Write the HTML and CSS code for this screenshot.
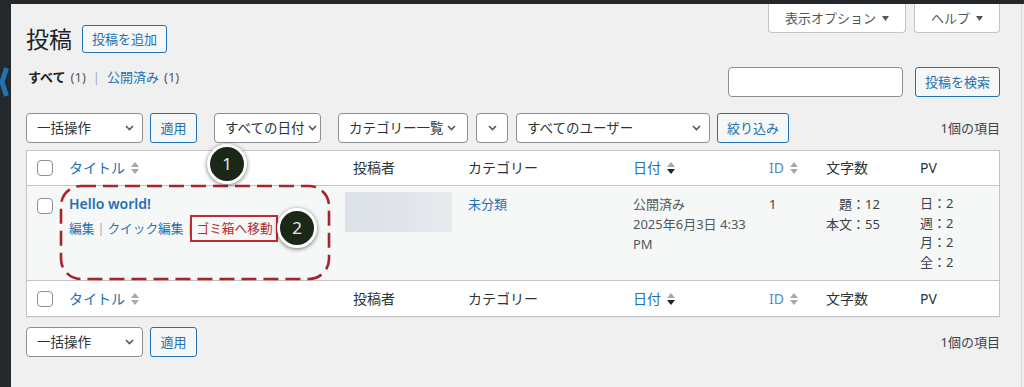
FILE: index.html
```html
<!DOCTYPE html>
<html lang="ja">
<head>
<meta charset="utf-8">
<title>投稿</title>
<link rel="stylesheet" href="styles.css">
</head>
<body>
<div class="topbar"></div>
<div class="shell">
  <aside class="sidebar">
    <svg class="menu-mark" width="11" height="30" viewBox="0 0 11 30"><polyline points="6.5,1 2,15 6.5,29" fill="none" stroke="#2271b1" stroke-width="5"/></svg>
  </aside>
  <main class="main">
    <div class="header">
      <div class="title-wrap">
        <h1 class="page-title">投稿</h1>
        <a class="btn-outline title-action">投稿を追加</a>
      </div>
      <div class="screen-meta">
        <div class="meta-tab">表示オプション <svg class="tri" width="7" height="5" viewBox="0 0 7 5"><path d="M0 0h7L3.5 5z" fill="#50575e"/></svg></div>
        <div class="meta-tab">ヘルプ <svg class="tri" width="7" height="5" viewBox="0 0 7 5"><path d="M0 0h7L3.5 5z" fill="#50575e"/></svg></div>
      </div>
    </div>

    <div class="subnav">
      <ul class="subsubsub">
        <li><b class="current">すべて</b><span class="count">(1)</span></li>
        <li class="sep">|</li>
        <li><a>公開済み</a><span class="count">(1)</span></li>
      </ul>
      <div class="search">
        <div class="search-input"></div>
        <a class="btn-outline search-btn">投稿を検索</a>
      </div>
    </div>

    <div class="tablenav">
      <div class="select w-bulk">一括操作<svg class="chev" width="9" height="6" viewBox="0 0 9 6"><path d="M1 1l3.5 3.5L8 1" fill="none" stroke="#50575e" stroke-width="1.6"/></svg></div>
      <a class="btn-outline apply">適用</a>
      <div class="filters">
        <div class="select w-date">すべての日付<svg class="chev" width="9" height="6" viewBox="0 0 9 6"><path d="M1 1l3.5 3.5L8 1" fill="none" stroke="#50575e" stroke-width="1.6"/></svg></div>
        <div class="select w-cat">カテゴリー一覧<svg class="chev" width="9" height="6" viewBox="0 0 9 6"><path d="M1 1l3.5 3.5L8 1" fill="none" stroke="#50575e" stroke-width="1.6"/></svg></div>
        <div class="select w-small"><svg class="chev" width="9" height="6" viewBox="0 0 9 6"><path d="M1 1l3.5 3.5L8 1" fill="none" stroke="#50575e" stroke-width="1.6"/></svg></div>
        <div class="select w-user">すべてのユーザー<svg class="chev" width="9" height="6" viewBox="0 0 9 6"><path d="M1 1l3.5 3.5L8 1" fill="none" stroke="#50575e" stroke-width="1.6"/></svg></div>
        <a class="btn-outline filter-btn">絞り込み</a>
      </div>
      <div class="displaying">1個の項目</div>
    </div>

    <div class="list">
      <div class="tr thead">
        <div class="th cbh"><span class="checkbox"></span></div>
        <div class="th sortable"><a>タイトル</a><svg class="sort" width="8" height="12" viewBox="0 0 8 12"><path d="M0 5L4 0l4 5z" fill="#a7aaad"/><path d="M0 7h8l-4 5z" fill="#a7aaad"/></svg></div>
        <div class="th">投稿者</div>
        <div class="th">カテゴリー</div>
        <div class="th sortable"><a>日付</a><svg class="sort" width="8" height="12" viewBox="0 0 8 12"><path d="M0 5L4 0l4 5z" fill="#a7aaad"/><path d="M0 7h8l-4 5z" fill="#1d2327"/></svg></div>
        <div class="th sortable"><a class="light">ID</a><svg class="sort" width="8" height="12" viewBox="0 0 8 12"><path d="M0 5L4 0l4 5z" fill="#a7aaad"/><path d="M0 7h8l-4 5z" fill="#a7aaad"/></svg></div>
        <div class="th">文字数</div>
        <div class="th">PV</div>
      </div>

      <div class="tr tbody">
        <div class="td cb"><span class="checkbox"></span></div>
        <div class="td">
          <a class="row-title">Hello world!</a>
          <div class="row-actions"><a>編集</a><span class="ra-sep">|</span><a>クイック編集</a><span class="ra-sep">|</span><a class="trash">ゴミ箱へ移動</a></div>
        </div>
        <div class="td author"><div class="blur"></div></div>
        <div class="td"><a>未分類</a></div>
        <div class="td date">公開済み<br>2025年6月3日 4:33<br>PM</div>
        <div class="td">1</div>
        <div class="td"><div class="words">題：12<br>本文：55</div></div>
        <div class="td pv">日：2<br>週：2<br>月：2<br>全：2</div>
      </div>

      <div class="tr tfoot">
        <div class="th cbh"><span class="checkbox"></span></div>
        <div class="th sortable"><a>タイトル</a><svg class="sort" width="8" height="12" viewBox="0 0 8 12"><path d="M0 5L4 0l4 5z" fill="#a7aaad"/><path d="M0 7h8l-4 5z" fill="#a7aaad"/></svg></div>
        <div class="th">投稿者</div>
        <div class="th">カテゴリー</div>
        <div class="th sortable"><a>日付</a><svg class="sort" width="8" height="12" viewBox="0 0 8 12"><path d="M0 5L4 0l4 5z" fill="#a7aaad"/><path d="M0 7h8l-4 5z" fill="#1d2327"/></svg></div>
        <div class="th sortable"><a class="light">ID</a><svg class="sort" width="8" height="12" viewBox="0 0 8 12"><path d="M0 5L4 0l4 5z" fill="#a7aaad"/><path d="M0 7h8l-4 5z" fill="#a7aaad"/></svg></div>
        <div class="th">文字数</div>
        <div class="th">PV</div>
      </div>
    </div>

    <div class="tablenav bottom">
      <div class="select w-bulk">一括操作<svg class="chev" width="9" height="6" viewBox="0 0 9 6"><path d="M1 1l3.5 3.5L8 1" fill="none" stroke="#50575e" stroke-width="1.6"/></svg></div>
      <a class="btn-outline apply">適用</a>
      <div class="displaying">1個の項目</div>
    </div>
  </main>
</div>

<div class="annot">
  <svg class="dash" width="274" height="98" viewBox="0 0 274 98"><rect x="2" y="2" width="268" height="93" rx="20" ry="20" fill="none" stroke="#a8232a" stroke-width="2.6" stroke-dasharray="15 7"/></svg>
  <div class="marker m1">1</div>
  <div class="marker m2">2</div>
</div>
</body>
</html>
```

FILE: styles.css
```css
* { box-sizing: border-box; margin: 0; padding: 0; }
html, body { background: #f0f0f1; }
body {
  width: 1024px;
  height: 387px;
  overflow: hidden;
  position: relative;
  font-family: "Noto Sans", "Noto Sans CJK JP", sans-serif;
  font-size: 13px;
  line-height: 20px;
  color: #3c434a;
}
a { color: #2271b1; text-decoration: none; }

.topbar { height: 4px; background: #23282d; }
.shell { display: flex; height: 383px; }
.sidebar { width: 11px; flex: none; background: #23282d; padding-top: 63px; }
.menu-mark { display: block; }
.main {
  flex: 1;
  padding: 0 21px 0 15px;
  border-right: 1px solid #d9d9db;
  margin-right: 2px;
}

/* header */
.header { display: flex; justify-content: space-between; align-items: flex-start; }
.title-wrap { display: flex; align-items: center; gap: 10px; margin-top: 21px; height: 28px; }
.page-title { font-size: 23px; font-weight: 400; line-height: 28px; color: #1d2327; }
.btn-outline {
  display: inline-flex;
  align-items: center;
  justify-content: center;
  height: 28px;
  padding: 0 10px;
  border: 1px solid #2271b1;
  border-radius: 3px;
  background: #f6f7f7;
  color: #2271b1;
  font-size: 13px;
  white-space: nowrap;
}
.title-action { width: 85px; }
.screen-meta { display: flex; gap: 8px; }
.meta-tab {
  display: flex;
  align-items: center;
  gap: 6px;
  height: 29px;
  padding: 0 16px;
  background: #fff;
  border: 1px solid #c3c4c7;
  border-top: 0;
  border-radius: 0 0 4px 4px;
  color: #50575e;
  font-size: 13px;
  white-space: nowrap;
}
.tri { display: block; }

/* sub nav */
.subnav { display: flex; justify-content: space-between; align-items: flex-start; margin-top: 14px; height: 30px; }
.subsubsub { display: flex; list-style: none; padding-left: 2px; color: #50575e; }
.current { color: #1d2327; font-weight: 700; }
.count { margin-left: 5px; color: #50575e; }
.subsubsub .sep { margin: 0 7px; color: #a7aaad; }
.search { display: flex; gap: 12px; }
.search-input { width: 175px; height: 30px; background: #fff; border: 1px solid #8c8f94; border-radius: 4px; }
.search-btn { height: 30px; width: 85px; }

/* tablenav */
.tablenav { display: flex; align-items: center; height: 30px; margin-top: 16px; }
.tablenav.bottom { margin-top: 10px; }
.select {
  display: flex;
  align-items: center;
  justify-content: space-between;
  height: 30px;
  padding: 0 8px 0 10px;
  background: #fff;
  border: 1px solid #8c8f94;
  border-radius: 4px;
  color: #2c3338;
  font-size: 13.5px;
  white-space: nowrap;
}
.chev { flex: none; display: block; }
.w-bulk { width: 117px; }
.w-date { width: 107px; padding-right: 3px; margin-right: 9px; }
.w-cat { width: 130px; padding-right: 11px; }
.w-small { width: 32px; justify-content: center; padding: 0; }
.w-user { width: 194px; }
.tablenav .btn-outline { height: 30px; }
.apply { width: 47px; margin-left: 7px; }
.filters { display: flex; gap: 8px; margin-left: 17px; }
.filter-btn { width: 72px; margin-left: -1px; }
.displaying { margin-left: auto; color: #3c434a; }

/* list table */
.list {
  margin-top: 7px;
  border: 1px solid #c3c4c7;
  background: #fff;
  box-shadow: 0 1px 1px rgba(0, 0, 0, 0.04);
}
.tr { display: grid; grid-template-columns: 34px 284px 115px 165px 136px 57px 94px 1fr; }
.thead { height: 35px; align-items: center; border-bottom: 1px solid #c3c4c7; }
.tfoot { height: 36px; align-items: center; border-top: 1px solid #c3c4c7; }
.th {
  display: flex;
  align-items: center;
  gap: 6px;
  padding: 0 8px;
  font-size: 14px;
  color: #2c3338;
  white-space: nowrap;
}
.th.cbh { padding: 0 0 0 10px; }
.sort { display: block; flex: none; }
.light { color: #4f8cc4; }
.checkbox {
  display: block;
  width: 16px;
  height: 16px;
  border: 1px solid #8c8f94;
  border-radius: 4px;
  background: #fff;
}

.tbody { background: #f6f7f7; }
.td { padding: 8px; color: #3c434a; }
.td.cb { padding: 12px 0 0 10px; }
.row-title { font-size: 14px; font-weight: 600; }
.row-actions { margin-top: 4px; white-space: nowrap; display: flex; font-size: 12.7px; }
.ra-sep { color: #a7aaad; margin: 0 3px; }
.trash { color: #b32d2e; position: relative; }
.trash::after {
  content: "";
  position: absolute;
  left: -7px;
  right: -5px;
  top: -3px;
  bottom: -4px;
  border: 2px solid #c0292f;
}
.td.author { padding: 6px 0 0 0; }
.blur {
  width: 107px;
  height: 40px;
  background: linear-gradient(90deg, #dce1e8 0%, #e1e5ea 55%, #e8ebee 100%);
}
.date { color: #50575e; }
.words { display: inline-block; text-align: right; }
.pv { line-height: 19.5px; }

/* annotations overlay */
.annot { position: absolute; left: 0; top: 0; width: 1024px; height: 387px; pointer-events: none; }
.dash { position: absolute; left: 59px; top: 184px; }
.marker {
  position: absolute;
  width: 40px;
  height: 40px;
  border-radius: 50%;
  background: #1b2817;
  border: 3px solid #fff;
  box-shadow: 0 1px 4px rgba(0, 0, 0, 0.55);
  color: #e8e8e8;
  font-family: "Noto Sans", sans-serif;
  font-size: 17px;
  line-height: 34px;
  text-align: center;
}
.m1 { left: 207px; top: 144px; }
.m2 { left: 277px; top: 208px; }
```
